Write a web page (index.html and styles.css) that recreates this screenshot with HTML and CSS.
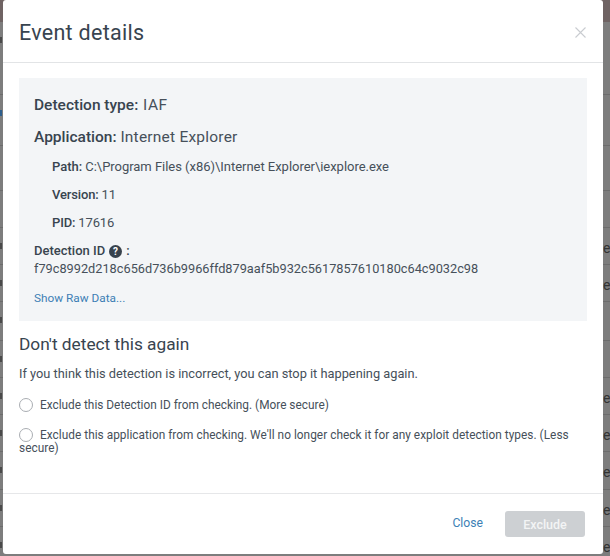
FILE: index.html
```html
<!DOCTYPE html>
<html lang="en">
<head>
<meta charset="utf-8">
<title>Event details</title>
<link rel="stylesheet" href="styles.css">
</head>
<body>
<div class="backdrop">
  <div class="bg-top"></div>
  <div class="bg-row r73"><i></i></div>
  <div class="bg-row r51"><i class="blue"></i></div>
  <div class="bg-row r45"></div>
  <div class="bg-row r37"></div>
  <div class="bg-row r37"><i></i><span>e</span></div>
  <div class="bg-row r37"><i></i><span>e</span></div>
  <div class="bg-row r39"><i></i></div>
  <div class="bg-row r37"><i></i></div>
  <div class="bg-row r37"><i></i><span>e</span></div>
  <div class="bg-row r37"><i></i><span>e</span></div>
  <div class="bg-row r38"><i></i><span>e</span></div>
  <div class="bg-row r37"><i></i><span>e</span></div>
  <div class="bg-row r28"><i></i><span>e</span></div>
</div>
<div class="modal">
  <header class="modal-head">
    <h1 class="title">Event details</h1>
    <svg class="close-x" width="11" height="11" viewBox="0 0 11 11" aria-label="Close"><path d="M.5.5l10 10M10.5.5l-10 10" stroke="#c9ccd0" stroke-width="1.1" fill="none"/></svg>
  </header>
  <section class="modal-body">
    <div class="panel">
      <p class="big first"><b>Detection type:</b> <span class="iaf">IAF</span></p>
      <p class="big second"><b>Application:</b> <span class="spaced">Internet Explorer</span></p>
      <p class="sub path"><b>Path:</b> C:\Program Files (x86)\Internet Explorer\iexplore.exe</p>
      <p class="sub"><b>Version:</b> 11</p>
      <p class="sub"><b>PID:</b> 17616</p>
      <p class="detect-label"><b>Detection ID</b>
        <svg class="help" width="13" height="13" viewBox="0 0 13 13"><circle cx="6.5" cy="6.5" r="6.5" fill="#37424d"/><text x="6.5" y="10.2" text-anchor="middle" class="help-q">?</text></svg>
        <b>:</b></p>
      <p class="detect-id">f79c8992d218c656d736b9966ffd879aaf5b932c5617857610180c64c9032c98</p>
      <a class="raw" href="#">Show Raw Data...</a>
    </div>
    <h2 class="again">Don't detect this again</h2>
    <p class="intro">If you think this detection is incorrect, you can stop it happening again.</p>
    <label class="opt one"><span class="radio"></span>Exclude this Detection ID from checking. (More secure)</label>
    <label class="opt two"><span class="radio"></span>Exclude this application from checking. We'll no longer check it for any exploit detection types. (Less secure)</label>
  </section>
  <footer class="modal-foot">
    <a class="close-link" href="#">Close</a>
    <button class="exclude" disabled>Exclude</button>
  </footer>
</div>
</body>
</html>
```
FILE: styles.css
```css
* { box-sizing: border-box; }
html, body { margin: 0; height: 100%; }
body {
  width: 610px;
  height: 556px;
  position: relative;
  overflow: hidden;
  background: #7d7d7d;
  font-family: Roboto, "Liberation Sans", sans-serif;
  color: #46505a;
}
b { font-weight: 500; color: #38444f; }
.backdrop { position: absolute; inset: 0; overflow: hidden; }
.bg-top { height: 22px; background: #6f6363; }
.bg-row { border-bottom: 1px solid #6c6c6c; position: relative; font-size: 14px; color: #333; }
.r73 { height: 73px; }
.r51 { height: 51px; }
.r45 { height: 45px; }
.r39 { height: 39px; }
.r38 { height: 38px; }
.r37 { height: 37px; }
.r28 { height: 28px; border-bottom: 0; }
.bg-row span { position: absolute; left: 603px; top: 12px; }
.bg-row i { position: absolute; left: 0; top: 15px; width: 2px; height: 6px; background: #4a4a4a; }
.bg-row i.blue { background: #2f5f8c; }
.modal {
  position: absolute;
  left: 3px; top: 0;
  width: 600px; height: 554px;
  background: #fff;
  border-radius: 3px;
  display: flex;
  flex-direction: column;
}
.modal-head {
  height: 63px;
  flex: none;
  border-bottom: 1px solid #e2e4e6;
  display: flex;
  align-items: center;
  justify-content: space-between;
  padding: 2px 17px 0 16px;
}
.title { margin: 0; font-size: 21.5px; font-weight: 400; color: #38444f; letter-spacing: .28px; }
.close-x { margin-top: 1px; }
.modal-body { flex: 1; padding: 15px 16px 0; }
.panel { height: 243px; background: #f3f5f7; padding: 17px 15px 0; }
p { margin: 0; }
.big { font-size: 15.5px; line-height: 20px; }
.big.second { margin-top: 12px; }
.iaf { letter-spacing: .5px; margin-left: 1px; }
.spaced { letter-spacing: .22px; }
.sub { font-size: 13px; line-height: 18px; margin: 0 0 0 18px; height: 18px; letter-spacing: -.03px; }
.sub.path { margin-top: 11px; }
.sub + .sub { margin-top: 10px; letter-spacing: -.15px; }
.detect-label { font-size: 13px; line-height: 18px; margin-top: 10px; display: flex; align-items: center; gap: 4px; }
.help-q { fill: #fff; font: 700 10px Roboto, sans-serif; }
.detect-id { font-size: 12.75px; line-height: 18px; }
.raw { display: block; margin-top: 12px; font-size: 11.8px; line-height: 16px; color: #3d7fb5; text-decoration: none; }
.again { margin: 11px 0 0; font-size: 17.3px; line-height: 24px; font-weight: 400; color: #38444f; }
.intro { margin-top: 9px; font-size: 12.8px; line-height: 18px; }
.opt { display: block; font-size: 11.85px; line-height: 13px; }
.opt.one { margin-top: 15px; }
.opt.two { margin-top: 16px; letter-spacing: .03px; }
.radio {
  display: inline-block;
  width: 14px; height: 14px;
  border: 1px solid #a9adb2;
  border-radius: 50%;
  background: #fff;
  margin-right: 7px;
  vertical-align: -3px;
}
.modal-foot {
  height: 61px;
  flex: none;
  border-top: 1px solid #e6e7e9;
  display: flex;
  justify-content: flex-end;
  align-items: center;
  padding: 0 18px 0 0;
  gap: 22px;
}
.close-link { font-size: 12.2px; color: #3d7fb5; text-decoration: none; margin-top: -3px; }
.exclude {
  width: 80px; height: 26px;
  border: 0;
  border-radius: 3px;
  background: #cdd0d3;
  color: #f3f4f5;
  font: 500 12.5px Roboto, sans-serif;
  padding: 0;
}
```
